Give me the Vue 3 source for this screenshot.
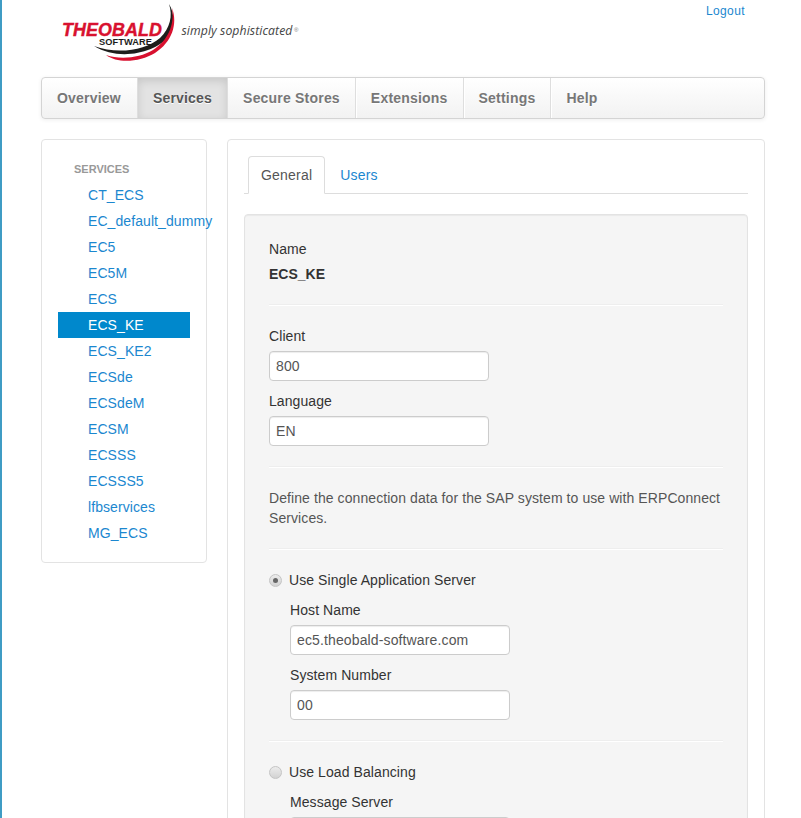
<script setup>
const navItems = ['Overview', 'Services', 'Secure Stores', 'Extensions', 'Settings', 'Help']
const services = [
  'CT_ECS', 'EC_default_dummy', 'EC5', 'EC5M', 'ECS', 'ECS_KE', 'ECS_KE2',
  'ECSde', 'ECSdeM', 'ECSM', 'ECSSS', 'ECSSS5', 'lfbservices', 'MG_ECS',
]
</script>

<template>
  <div class="page">
    <div class="container">
      <header class="header">
        <svg class="logo" width="250" height="70" viewBox="55 0 250 70">
          <path d="M169 4 C175 14 175 26 168 37 C156 52 120 62 94 46 C118 55 146 50 160 38 C170 28 173 16 169 4 Z" fill="#1d1d1b" />
          <path d="M172 8 C178 24 172 42 155 53 C140 62 118 64 106 55 C120 60 140 58 153 50 C167 41 175 26 172 8 Z" fill="#d8112f" />
          <text x="62" y="36" class="logo-name" textLength="100" lengthAdjust="spacingAndGlyphs">THEOBALD</text>
          <text x="99" y="45" class="logo-sub" textLength="53" lengthAdjust="spacingAndGlyphs">SOFTWARE</text>
          <text x="181.5" y="35" class="logo-tag" textLength="111" lengthAdjust="spacingAndGlyphs">simply sophisticated</text>
          <text x="294" y="32" class="logo-reg">®</text>
        </svg>
        <a class="logout">Logout</a>
      </header>

      <nav class="navbar">
        <a
          v-for="item in navItems"
          :key="item"
          class="nav-item"
          :class="{ active: item === 'Services' }"
        >
          {{ item }}
        </a>
      </nav>

      <div class="columns">
        <aside class="sidebar">
          <p class="side-title">Services</p>
          <a
            v-for="service in services"
            :key="service"
            class="side-link"
            :class="{ active: service === 'ECS_KE' }"
          >
            {{ service }}
          </a>
        </aside>

        <main class="card">
          <div class="tabs">
            <a class="tab active">General</a>
            <a class="tab">Users</a>
          </div>

          <div class="well">
            <label class="label">Name</label>
            <p class="value">ECS_KE</p>
            <hr />

            <label class="label">Client</label>
            <input class="input" value="800" />
            <label class="label spaced">Language</label>
            <input class="input" value="EN" />
            <hr />

            <p class="text">Define the connection data for the SAP system to use with ERPConnect Services.</p>
            <hr />

            <div class="radio-row">
              <span class="radio checked"></span>
              <span>Use Single Application Server</span>
            </div>
            <div class="indent">
              <label class="label spaced">Host Name</label>
              <input class="input" value="ec5.theobald-software.com" />
              <label class="label spaced">System Number</label>
              <input class="input" value="00" />
            </div>
            <hr />

            <div class="radio-row">
              <span class="radio"></span>
              <span>Use Load Balancing</span>
            </div>
            <div class="indent">
              <label class="label spaced">Message Server</label>
              <input class="input" />
            </div>
          </div>
        </main>
      </div>
    </div>
  </div>
</template>

<style>
html,
body {
  margin: 0;
  overflow: hidden;
  background: #fff;
}
</style>

<style scoped>
.page {
  height: 818px;
  overflow: hidden;
  box-sizing: border-box;
  border-left: 2px solid #3f9cc4;
  padding-left: 39px;
  font-family: "Liberation Sans", Arial, sans-serif;
  font-size: 14px;
  line-height: 20px;
  letter-spacing: 0.08px;
  color: #333;
}

.container {
  width: 724px;
}

.header {
  display: flex;
  justify-content: space-between;
  height: 77px;
}

.logo {
  display: block;
  margin-left: 14px;
}

.logo-name {
  font: italic 700 18px "Liberation Sans", Arial, sans-serif;
  fill: #d8112f;
  stroke: #d8112f;
  stroke-width: 0.4px;
}

.logo-sub {
  font: 700 8.5px "Liberation Sans", Arial, sans-serif;
  fill: #1d1d1b;
}

.logo-tag {
  font: italic 400 12.3px "Open Sans", "Liberation Sans", sans-serif;
  fill: #444;
}

.logo-reg {
  font: 400 6px "Liberation Sans", Arial, sans-serif;
  fill: #777;
}

.logout {
  margin: 1px 20px 0 0;
  font-size: 12px;
  letter-spacing: 0.4px;
  color: #1b87cf;
}

.navbar {
  display: flex;
  height: 42px;
  box-sizing: border-box;
  border: 1px solid #d4d4d4;
  border-radius: 4px;
  background: linear-gradient(180deg, #fff, #f2f2f2);
  box-shadow: 0 1px 4px rgba(0, 0, 0, 0.07);
}

.nav-item {
  padding: 0 15px;
  border-right: 1px solid #dedede;
  box-shadow: 1px 0 0 #fff;
  font-weight: 700;
  letter-spacing: 0.2px;
  line-height: 40px;
  color: #777;
  text-shadow: 0 1px 0 #fff;
}

.nav-item:first-child {
  border-radius: 4px 0 0 4px;
  padding-right: 16px;
}

.nav-item:last-child {
  border-right: 0;
  box-shadow: none;
}

.nav-item.active {
  background: #e3e3e3;
  box-shadow: inset 0 3px 8px rgba(0, 0, 0, 0.125);
  color: #555;
}

.columns {
  display: flex;
  align-items: flex-start;
  gap: 20px;
  margin-top: 20px;
}

.sidebar,
.card {
  box-sizing: border-box;
  min-width: 0;
  border: 1px solid #e3e3e3;
  border-radius: 4px;
  padding: 16px;
  background: #fff;
}

.sidebar {
  flex: 0 0 166px;
  height: 424px;
}

.side-title {
  margin: 0;
  padding-left: 16px;
  font-size: 11px;
  font-weight: 700;
  line-height: 26px;
  letter-spacing: 0;
  text-transform: uppercase;
  color: #999;
}

.side-link {
  display: block;
  padding-left: 30px;
  line-height: 26px;
  white-space: nowrap;
  color: #1b87cf;
}

.side-link.active {
  background: #0088cc;
  color: #fff;
}

.card {
  flex: 0 0 538px;
}

.tabs {
  display: flex;
  height: 37px;
  padding-left: 4px;
  border-bottom: 1px solid #ddd;
}

.tab {
  box-sizing: border-box;
  height: 37px;
  padding: 8px 12px;
  margin-right: 2px;
  border: 1px solid transparent;
  border-radius: 4px 4px 0 0;
  letter-spacing: 0.2px;
  line-height: 20px;
  color: #1b87cf;
}

.tab.active {
  height: 38px;
  border-color: #ddd;
  border-bottom-color: #fff;
  background: #fff;
  color: #555;
}

.well {
  margin-top: 20px;
  padding: 24px;
  border: 1px solid #e3e3e3;
  border-radius: 4px;
  background: #f5f5f5;
  box-shadow: inset 0 1px 1px rgba(0, 0, 0, 0.05);
}

.label {
  display: block;
  margin-bottom: 5px;
}

.label.spaced {
  margin-top: 10px;
}

.value {
  margin: 0;
  font-weight: 700;
  letter-spacing: 0;
}

.text {
  margin: 0;
  color: #555;
}

hr {
  margin: 20px 0;
  border: 0;
  border-top: 1px solid #eee;
  border-bottom: 1px solid #fff;
}

.input {
  display: block;
  box-sizing: border-box;
  width: 220px;
  height: 30px;
  padding: 4px 6px;
  border: 1px solid #ccc;
  border-radius: 4px;
  background: #fff;
  box-shadow: inset 0 1px 1px rgba(0, 0, 0, 0.075);
  font: 14px/20px "Liberation Sans", Arial, sans-serif;
  letter-spacing: 0.13px;
  color: #555;
}

.radio-row {
  display: flex;
  align-items: center;
  gap: 7px;
  height: 20px;
}

.radio {
  position: relative;
  box-sizing: border-box;
  width: 13px;
  height: 13px;
  border: 1px solid #c4c4c4;
  border-radius: 50%;
  background: linear-gradient(180deg, #ececec, #d2d2d2);
}

.radio.checked::after {
  content: "";
  position: absolute;
  top: 3px;
  left: 3px;
  width: 5px;
  height: 5px;
  border-radius: 50%;
  background: #666;
}

.indent {
  padding-left: 21px;
}
</style>
